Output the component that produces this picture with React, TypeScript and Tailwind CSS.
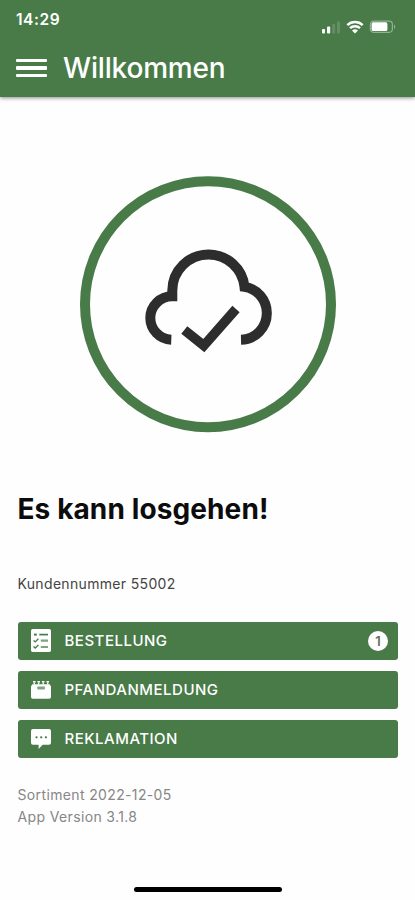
import type { ReactNode } from "react";

function StatusIcons() {
  return (
    <svg className="mt-[19px] h-4 w-[76px]" viewBox="0 0 76 16" fill="none">
      <rect x="2" y="10" width="3" height="4.5" rx="1" fill="#fff" />
      <rect x="7" y="7.5" width="3.2" height="7" rx="1" fill="#fff" />
      <rect x="12.2" y="5" width="3" height="9.5" rx="1" fill="#648f65" />
      <rect x="17" y="2.5" width="3" height="12" rx="1" fill="#648f65" />
      <path d="M27.3 6.1a11.2 11.2 0 0 1 15.4 0M30 9.2a7.3 7.3 0 0 1 10 0" stroke="#fff" strokeWidth="2.4" />
      <path d="M32 11.6a4.5 4.5 0 0 1 6 0L35 14.6z" fill="#fff" />
      <rect x="50.4" y="2.1" width="22" height="11.2" rx="3.2" stroke="#91b191" strokeWidth="1.2" />
      <rect x="51.6" y="3.3" width="15.8" height="8.8" rx="1.6" fill="#fff" />
      <path d="M74 5.5v4.6c1.8-.8 1.8-3.8 0-4.6z" fill="#91b191" />
    </svg>
  );
}

function ListIcon() {
  return (
    <svg className="h-6 w-5" viewBox="0 0 20 24" fill="none">
      <rect x="0" y="0" width="20" height="23" rx="1.8" fill="#fff" />
      <g stroke="#487b48" strokeWidth="1.7">
        <path d="M8.3 5.6H17" />
        <path d="M9.8 11.7H17M9.8 18H17" stroke="#7fa47f" strokeWidth="2.2" />
        <path d="M3 5.6h2.8" strokeWidth="2" />
        <path d="M2.6 11.4l1.6 1.5 3.2-3.1M2.6 17.6l1.6 1.5 3.2-3.1" strokeWidth="1.4" />
      </g>
    </svg>
  );
}

function CrateIcon() {
  return (
    <svg className="h-[18px] w-5" viewBox="0 0 20 18" fill="none">
      <path d="M1.3 3.2H18.7L20 5.5V16a1.7 1.7 0 0 1-1.7 1.7H1.7A1.7 1.7 0 0 1 0 16V5.5z" fill="#fff" />
      <path d="M2 .8h2.6M6.4 .8H9M10.9 .8h2.6M15.4 .8H18" stroke="#fff" strokeWidth="1.6" />
      <path d="M3.3 1.4v2M7.7 1.4v2M12.2 1.4v2M16.7 1.4v2" stroke="#fff" strokeWidth="1.3" />
      <rect x="6.3" y="5.6" width="7.6" height="2.8" rx=".6" fill="#7fa47f" />
    </svg>
  );
}

function ChatIcon() {
  return (
    <svg className="h-5 w-5" viewBox="0 0 20 20">
      <path d="M2 0H18a2 2 0 0 1 2 2V13.8a2 2 0 0 1-2 2H11.7L7.6 20V15.8H2a2 2 0 0 1-2-2V2A2 2 0 0 1 2 0z" fill="#fff" />
      <g fill="#487b48">
        <circle cx="5.5" cy="8.3" r="1.15" />
        <circle cx="10.2" cy="8.3" r="1.15" />
        <circle cx="14.9" cy="8.3" r="1.15" />
      </g>
    </svg>
  );
}

function ActionButton({ icon, label, badge }: { icon: ReactNode; label: string; badge?: number }) {
  return (
    <button className="flex h-[38px] w-full items-center rounded-[3px] bg-[#487b48] pl-[13px] pr-[10px] text-white">
      <span className="flex w-5 items-center justify-center">{icon}</span>
      <span className="ml-[14px] text-[15px] font-medium leading-5 tracking-[0.5px]">{label}</span>
      {badge !== undefined && (
        <span className="ml-auto flex size-5 items-center justify-center rounded-full bg-white text-[13px] font-semibold leading-none text-[#5a705a]">
          {badge}
        </span>
      )}
    </button>
  );
}

export default function App() {
  return (
    <div className="flex h-[900px] w-[415px] flex-col overflow-hidden bg-[#fefefe] font-['Inter',sans-serif]">
      <header className="h-[97px] shrink-0 bg-[#487b48] text-white shadow-[0_1px_4px_rgba(0,0,0,0.45)]">
        <div className="flex h-[46px] justify-between pl-4 pr-[19px]">
          <span className="mt-[10px] text-[15.5px] font-semibold leading-5 tracking-[0.55px]">14:29</span>
          <StatusIcons />
        </div>
        <div className="flex h-11 items-center pl-4">
          <div className="flex w-[31px] flex-col gap-1">
            <span className="h-[3.5px] rounded-[1px] bg-white" />
            <span className="h-[3.5px] rounded-[1px] bg-white" />
            <span className="h-[3.5px] rounded-[1px] bg-white" />
          </div>
          <h1 className="ml-4 text-[28px] font-medium leading-8 tracking-[-0.17px]">Willkommen</h1>
        </div>
      </header>

      <main className="flex flex-col pl-[17.5px] pr-[17px]">
        <svg className="ml-[60.5px] mt-[77px] size-[260px] shrink-0" viewBox="78 174 260 260" fill="none">
          <circle cx="208" cy="304.3" r="123" stroke="#487b48" strokeWidth="10" />
          <path
            d="M171.3 339.7A21.8 21.8 0 0 1 150.3 318A21.8 21.8 0 0 1 172.3 296.3V290.5A36.2 36.2 0 0 1 208.5 254.4A36.2 36.2 0 0 1 244.5 286.8A26.4 26.4 0 0 1 266.8 313A26.4 26.4 0 0 1 241 339.7"
            stroke="#2d2d2d"
            strokeWidth="10"
          />
          <path d="M184.3 330L203.8 345.6L236 309" stroke="#2d2d2d" strokeWidth="9.6" />
        </svg>

        <h2 className="mt-[57px] text-[28px] font-bold leading-9 tracking-[0.11px] text-[#0c0c0c]">Es kann losgehen!</h2>
        <p className="mt-[47px] text-[14px] leading-5 tracking-[0.33px] text-[#444]">Kundennummer 55002</p>

        <div className="mt-7 flex flex-col gap-[11px]">
          <ActionButton icon={<ListIcon />} label="BESTELLUNG" badge={1} />
          <ActionButton icon={<CrateIcon />} label="PFANDANMELDUNG" />
          <ActionButton icon={<ChatIcon />} label="REKLAMATION" />
        </div>

        <div className="mt-[26px] text-[14px] leading-[22px] tracking-[0.36px] text-[#868686]">
          <p>Sortiment 2022-12-05</p>
          <p>App Version 3.1.8</p>
        </div>
      </main>

      <div className="mb-2 ml-[134px] mt-auto h-[5px] w-[148px] shrink-0 rounded-full bg-black" />
    </div>
  );
}
